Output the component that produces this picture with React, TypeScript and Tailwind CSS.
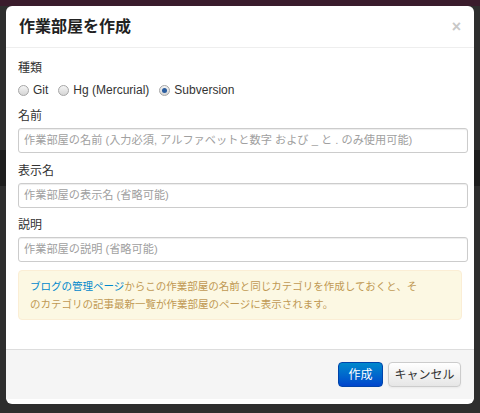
import React from 'react';

const font = { fontFamily: '"Liberation Sans", "Noto Sans CJK JP", sans-serif' };

function Radio({ checked, label }: { checked?: boolean; label: string }) {
  return (
    <label className="flex items-center gap-[4px] mr-[10px]">
      <span className="w-[11px] h-[11px] rounded-full border border-[#a6a6a6] bg-gradient-to-b from-[#f4f4f4] to-[#d6d6d6] flex items-center justify-center">
        {checked && <span className="w-[5px] h-[5px] rounded-full bg-[#2a5d9f]" />}
      </span>
      <span className="text-[12px] text-[#333]">{label}</span>
    </label>
  );
}

function Field({ label, placeholder, top }: { label: string; placeholder: string; top: string }) {
  return (
    <>
      <div className={`${top} text-[12px] leading-[18px] text-[#333]`}>{label}</div>
      <div className="mt-[3px] w-[450px] h-[25px] border border-[#cccccc] rounded-[3px] bg-white flex items-center px-[5px] shadow-[inset_0_1px_1px_rgba(0,0,0,0.075)]">
        <span className="text-[11.2px] text-[#a0a0a0] whitespace-nowrap">{placeholder}</span>
      </div>
    </>
  );
}

export default function App() {
  return (
    <div style={font} className="relative w-[480px] h-[413px] bg-[#2e2e2e] overflow-hidden">
      {/* backdrop page */}
      <div className="h-[6px] bg-[#3a1c2c]" />
      <div className="mt-[144px] h-[36px] bg-[#1e1e1e]" />

      <div className="absolute left-[6px] top-[6px] w-[468px] h-[398px] bg-white rounded-[6px] flex flex-col overflow-hidden">
        {/* header */}
        <div className="h-[42px] border-b border-[#eeeeee] flex items-center justify-between pl-[13px] pr-[13px] shrink-0">
          <h3 className="text-[16px] font-bold text-[#222]">作業部屋を作成</h3>
          <span className="text-[16px] font-bold text-[#c8c8c8] leading-none">×</span>
        </div>

        {/* body */}
        <div className="flex-1 pl-[12px] pt-[11px]">
          <div className="text-[12px] leading-[18px] text-[#333]">種類</div>
          <div className="mt-[4px] h-[18px] flex items-center">
            <Radio label="Git" />
            <Radio label="Hg (Mercurial)" />
            <Radio label="Subversion" checked />
          </div>
          <Field top="mt-[8px]" label="名前" placeholder="作業部屋の名前 (入力必須, アルファベットと数字 および _ と . のみ使用可能)" />
          <Field top="mt-[9px]" label="表示名" placeholder="作業部屋の表示名 (省略可能)" />
          <Field top="mt-[8px]" label="説明" placeholder="作業部屋の説明 (省略可能)" />
          <div className="mt-[8px] w-[444px] h-[50px] bg-[#fcf8e3] border border-[#fbeed5] rounded-[4px] px-[11px] pt-[6px] text-[10.5px] leading-[18px] text-[#c09853]">
            <span className="text-[#0088cc]">ブログの管理ページ</span>からこの作業部屋の名前と同じカテゴリを作成しておくと、そ
            <br />
            のカテゴリの記事最新一覧が作業部屋のページに表示されます。
          </div>
        </div>

        {/* footer */}
        <div className="h-[50px] shrink-0 bg-[#f5f5f5] border-t border-[#dddddd] flex items-center justify-end gap-[5px] pr-[13px] mb-[5px]">
          <button className="w-[45px] h-[25px] rounded-[4px] border border-[#0044aa] bg-gradient-to-b from-[#0088cc] to-[#0044cc] text-white text-[12px]">
            作成
          </button>
          <button className="w-[73px] h-[25px] rounded-[4px] border border-[#cccccc] bg-gradient-to-b from-white to-[#e6e6e6] text-[#333] text-[12px] shadow-[0_1px_2px_rgba(0,0,0,0.05)]">
            キャンセル
          </button>
        </div>
      </div>
    </div>
  );
}
